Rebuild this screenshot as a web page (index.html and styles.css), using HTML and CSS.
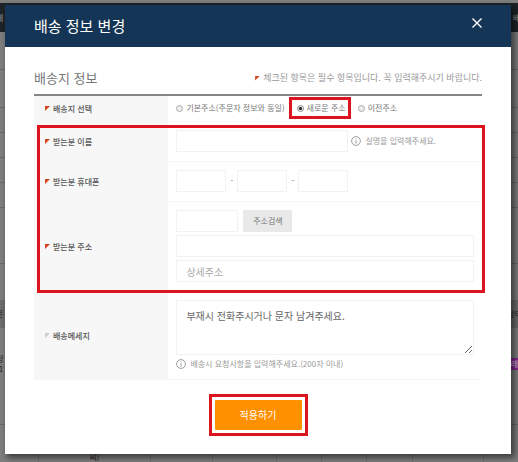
FILE: index.html
```html
<!DOCTYPE html>
<html lang="ko">
<head>
<meta charset="utf-8">
<meta name="viewport" content="width=device-width, initial-scale=1">
<title>배송 정보 변경</title>
<link rel="stylesheet" href="styles.css">
</head>
<body>
<div class="backdrop">
  <div class="site-bar"><span>제</span><span>배</span></div>
  <div class="site-line site-line-tall"></div>
  <div class="site-line site-line-tall"></div>
  <div class="site-line"></div>
  <div class="site-line"></div>
  <div class="site-line"></div>
  <div class="site-line"></div>
  <div class="site-line site-line-total"></div>
  <div class="site-gap"></div>
  <div class="site-head"><span>문</span><span>상태</span></div>
  <div class="site-order"><span>정<br>(1</span><span class="tag">거래</span></div>
  <div class="site-line"></div>
  <div class="site-cells"><span></span><span>씨)</span><span></span><span></span><span></span><span></span><span></span><span></span></div>
</div>

<section class="modal" role="dialog" aria-labelledby="modal-title">
  <header class="modal-header">
    <h1 id="modal-title">배송 정보 변경</h1>
    <button class="close" type="button" aria-label="닫기">
      <svg viewBox="0 0 12 12" width="12" height="12"><path d="M1.5 1.5 10.5 10.5M10.5 1.5 1.5 10.5"/></svg>
    </button>
  </header>

  <form class="modal-body">
    <div class="section-head">
      <h2>배송지 정보</h2>
      <p class="notice"><i class="mark"></i>체크된 항목은 필수 항목입니다. 꼭 입력해주시기 바랍니다.</p>
    </div>

    <div class="fields">
      <div class="row row-choice" role="radiogroup" aria-labelledby="choice-label">
        <span class="name" id="choice-label"><i class="mark"></i>배송지 선택</span>
        <div class="control choices">
          <label class="choice"><input type="radio" name="address-type">기본주소(주문자 정보와 동일)</label>
          <label class="choice choice-marked"><input type="radio" name="address-type" checked>새로운 주소</label>
          <label class="choice"><input type="radio" name="address-type">이전주소</label>
        </div>
      </div>

      <div class="group-marked">
        <div class="row">
          <label class="name" for="receiver"><i class="mark"></i>받는분 이름</label>
          <div class="control">
            <input class="field field-name" id="receiver" type="text">
            <p class="hint"><svg viewBox="0 0 10 10" width="10" height="10"><circle cx="5" cy="5" r="4.4"/><path d="M5 2.3V3.3M5 4.2V7.7"/></svg>실명을 입력해주세요.</p>
          </div>
        </div>
        <div class="row">
          <label class="name" for="phone"><i class="mark"></i>받는분 휴대폰</label>
          <div class="control phone">
            <input class="field field-phone" id="phone" type="text"><span>-</span>
            <input class="field field-phone" type="text" aria-label="휴대폰 가운데 자리"><span>-</span>
            <input class="field field-phone" type="text" aria-label="휴대폰 끝자리">
          </div>
        </div>
        <div class="row">
          <label class="name" for="zip"><i class="mark"></i>받는분 주소</label>
          <div class="control stack">
            <div class="zip-line">
              <input class="field field-zip" id="zip" type="text">
              <button class="search" type="button">주소검색</button>
            </div>
            <input class="field" type="text" aria-label="주소">
            <input class="field" type="text" aria-label="상세주소" placeholder="상세주소">
          </div>
        </div>
      </div>

      <div class="row">
        <label class="name" for="message"><i class="mark mark-off"></i>배송메세지</label>
        <div class="control stack">
          <textarea class="field message" id="message">부재시 전화주시거나 문자 남겨주세요.</textarea>
          <p class="hint"><svg viewBox="0 0 10 10" width="10" height="10"><circle cx="5" cy="5" r="4.4"/><path d="M5 2.3V3.3M5 4.2V7.7"/></svg>배송시 요청사항을 입력해주세요.(200자 이내)</p>
        </div>
      </div>
    </div>

    <div class="actions">
      <div class="submit-marked"><button class="submit" type="submit">적용하기</button></div>
    </div>
  </form>
</section>
</body>
</html>
```
FILE: styles.css
```css
* {
  box-sizing: border-box;
}

body {
  margin: 0;
  padding: 5px 7px 9px 5px;
  overflow: hidden;
  background: #7e7e7e;
  color: #777;
  font: 8px/12px "Noto Sans CJK KR", sans-serif;
}

h1, h2, p {
  margin: 0;
  font-weight: 400;
}

input, button, textarea {
  margin: 0;
  font: inherit;
  color: inherit;
}

/* Dimmed page behind the dialog */
.backdrop {
  position: absolute;
  inset: 0;
  z-index: -1;
  display: flex;
  flex-direction: column;
  overflow: hidden;
  padding-top: 3px;
  color: #222;
}

.site-bar, .site-head, .site-order {
  display: flex;
  justify-content: space-between;
  align-items: center;
  flex: none;
}

.site-bar > :first-child, .site-head > :first-child, .site-order > :first-child {
  margin-left: -4px;
}

.site-bar > :last-child {
  margin-right: -2px;
}

.site-head > :last-child {
  margin-right: -4px;
}

.site-bar {
  height: 29px;
  background: #1d2328;
  color: #999;
}

.site-line {
  flex: none;
  height: 25px;
  border-bottom: 1px solid #6a6a6a;
}

.site-line-tall {
  height: 38px;
}

.site-line-total {
  height: 56px;
}

.site-gap {
  flex: none;
  height: 36px;
}

.site-head {
  height: 28px;
  background: #6c6c6c;
}

.site-order {
  height: 72px;
  line-height: 10px;
}

.tag {
  padding: 1px 0;
  background: #8a2594;
  color: #ccc;
}

.site-cells {
  flex: 1;
  display: grid;
  grid-template-columns: 39fr 112fr 62fr 64fr 45fr 45fr 46fr 71fr 34fr;
  text-align: center;
}

.site-cells span {
  padding-top: 26px;
  border-right: 1px solid #6e6e6e;
}

/* Dialog */
.modal {
  background: #fff;
  box-shadow: 3px 3px 6px 1px rgba(0, 0, 0, .5);
}

.modal-header {
  display: flex;
  justify-content: space-between;
  align-items: center;
  height: 42px;
  padding: 0 28px 0 29px;
  background: #143555;
  color: #fff;
}

h1 {
  font-size: 15px;
  line-height: 20px;
}

.close {
  display: flex;
  padding: 0 0 6px;
  border: 0;
  background: none;
}

.close path {
  fill: none;
  stroke: #fff;
  stroke-width: 1.4;
}

.modal-body {
  padding: 21px 29px 18px;
}

.section-head {
  display: flex;
  justify-content: space-between;
  align-items: center;
  height: 26px;
  padding-bottom: 6px;
}

h2 {
  font-size: 13px;
  line-height: 20px;
}

.notice {
  display: flex;
  align-items: center;
  color: #999;
  font-size: 9px;
}

.mark {
  flex: none;
  width: 5px;
  height: 5px;
  margin-right: 3px;
  background: #d8431f;
  clip-path: polygon(0 0, 100% 0, 0 100%);
}

.mark-off {
  background: #ccc;
}

.fields {
  border-top: 2px solid #868686;
}

.row {
  display: flex;
  border-bottom: 1px solid #f6f6f6;
}

.name {
  display: flex;
  align-items: center;
  flex: 0 0 30%;
  padding-left: 11px;
  background: #f7f7f7;
  color: #555;
  font-weight: 500;
}

.control {
  flex: 1;
  display: flex;
  align-items: center;
  padding: 8px 8px 9px;
}

.row-choice .control {
  padding: 6px 8px 7px;
}

.choices {
  gap: 12px;
}

.choice {
  position: relative;
  display: flex;
  align-items: center;
  gap: 3px;
  white-space: nowrap;
}

.choice input {
  appearance: none;
  width: 7px;
  height: 7px;
  border: 1px solid #aaa;
  border-radius: 50%;
  background: #eee;
}

.choice input:checked {
  background: radial-gradient(#222 0 1px, #eee 2px);
  border-color: #888;
}

/* Red guide frames */
.choice-marked::after, .group-marked::after {
  content: "";
  position: absolute;
  border: 3px solid #dc141e;
  pointer-events: none;
}

.choice-marked::after {
  inset: -5px -5px -5px -8px;
}

.group-marked {
  position: relative;
}

.group-marked::after {
  inset: 3px -3px -1px 3px;
}

.submit-marked {
  padding: 3px;
  border: 3px solid #dc141e;
}

.field {
  width: 100%;
  height: 22px;
  padding: 0 9px;
  border: 1px solid #f2f2f2;
  background: #fff;
  font-size: 10px;
}

.field::placeholder {
  color: #aaa;
}

.field-name {
  flex: 0 0 172px;
}

.field-phone {
  flex: 0 0 50px;
}

.phone span {
  width: 11px;
  text-align: center;
}

.stack {
  flex-direction: column;
  align-items: stretch;
  gap: 3px;
}

.zip-line {
  display: flex;
  gap: 5px;
}

.field-zip {
  flex: 0 0 62px;
}

.search {
  width: 49px;
  padding: 0;
  border: 0;
  border-radius: 1px;
  background: #e9e9e9;
}

.message {
  display: block;
  height: 55px;
  padding: 8px 9px;
  line-height: 14px;
  color: #666;
  resize: vertical;
}

.hint {
  display: flex;
  align-items: center;
  gap: 4px;
  color: #999;
}

.field-name + .hint {
  margin-left: 3px;
}

.hint svg {
  fill: none;
  stroke: #888;
  stroke-width: .8;
}

.actions {
  display: flex;
  justify-content: center;
  padding-top: 14px;
}

.submit {
  display: block;
  width: 87px;
  height: 30px;
  padding: 0;
  border: 0;
  border-radius: 1px;
  background: #ff9000;
  color: #fff;
  font-size: 10px;
}
```
